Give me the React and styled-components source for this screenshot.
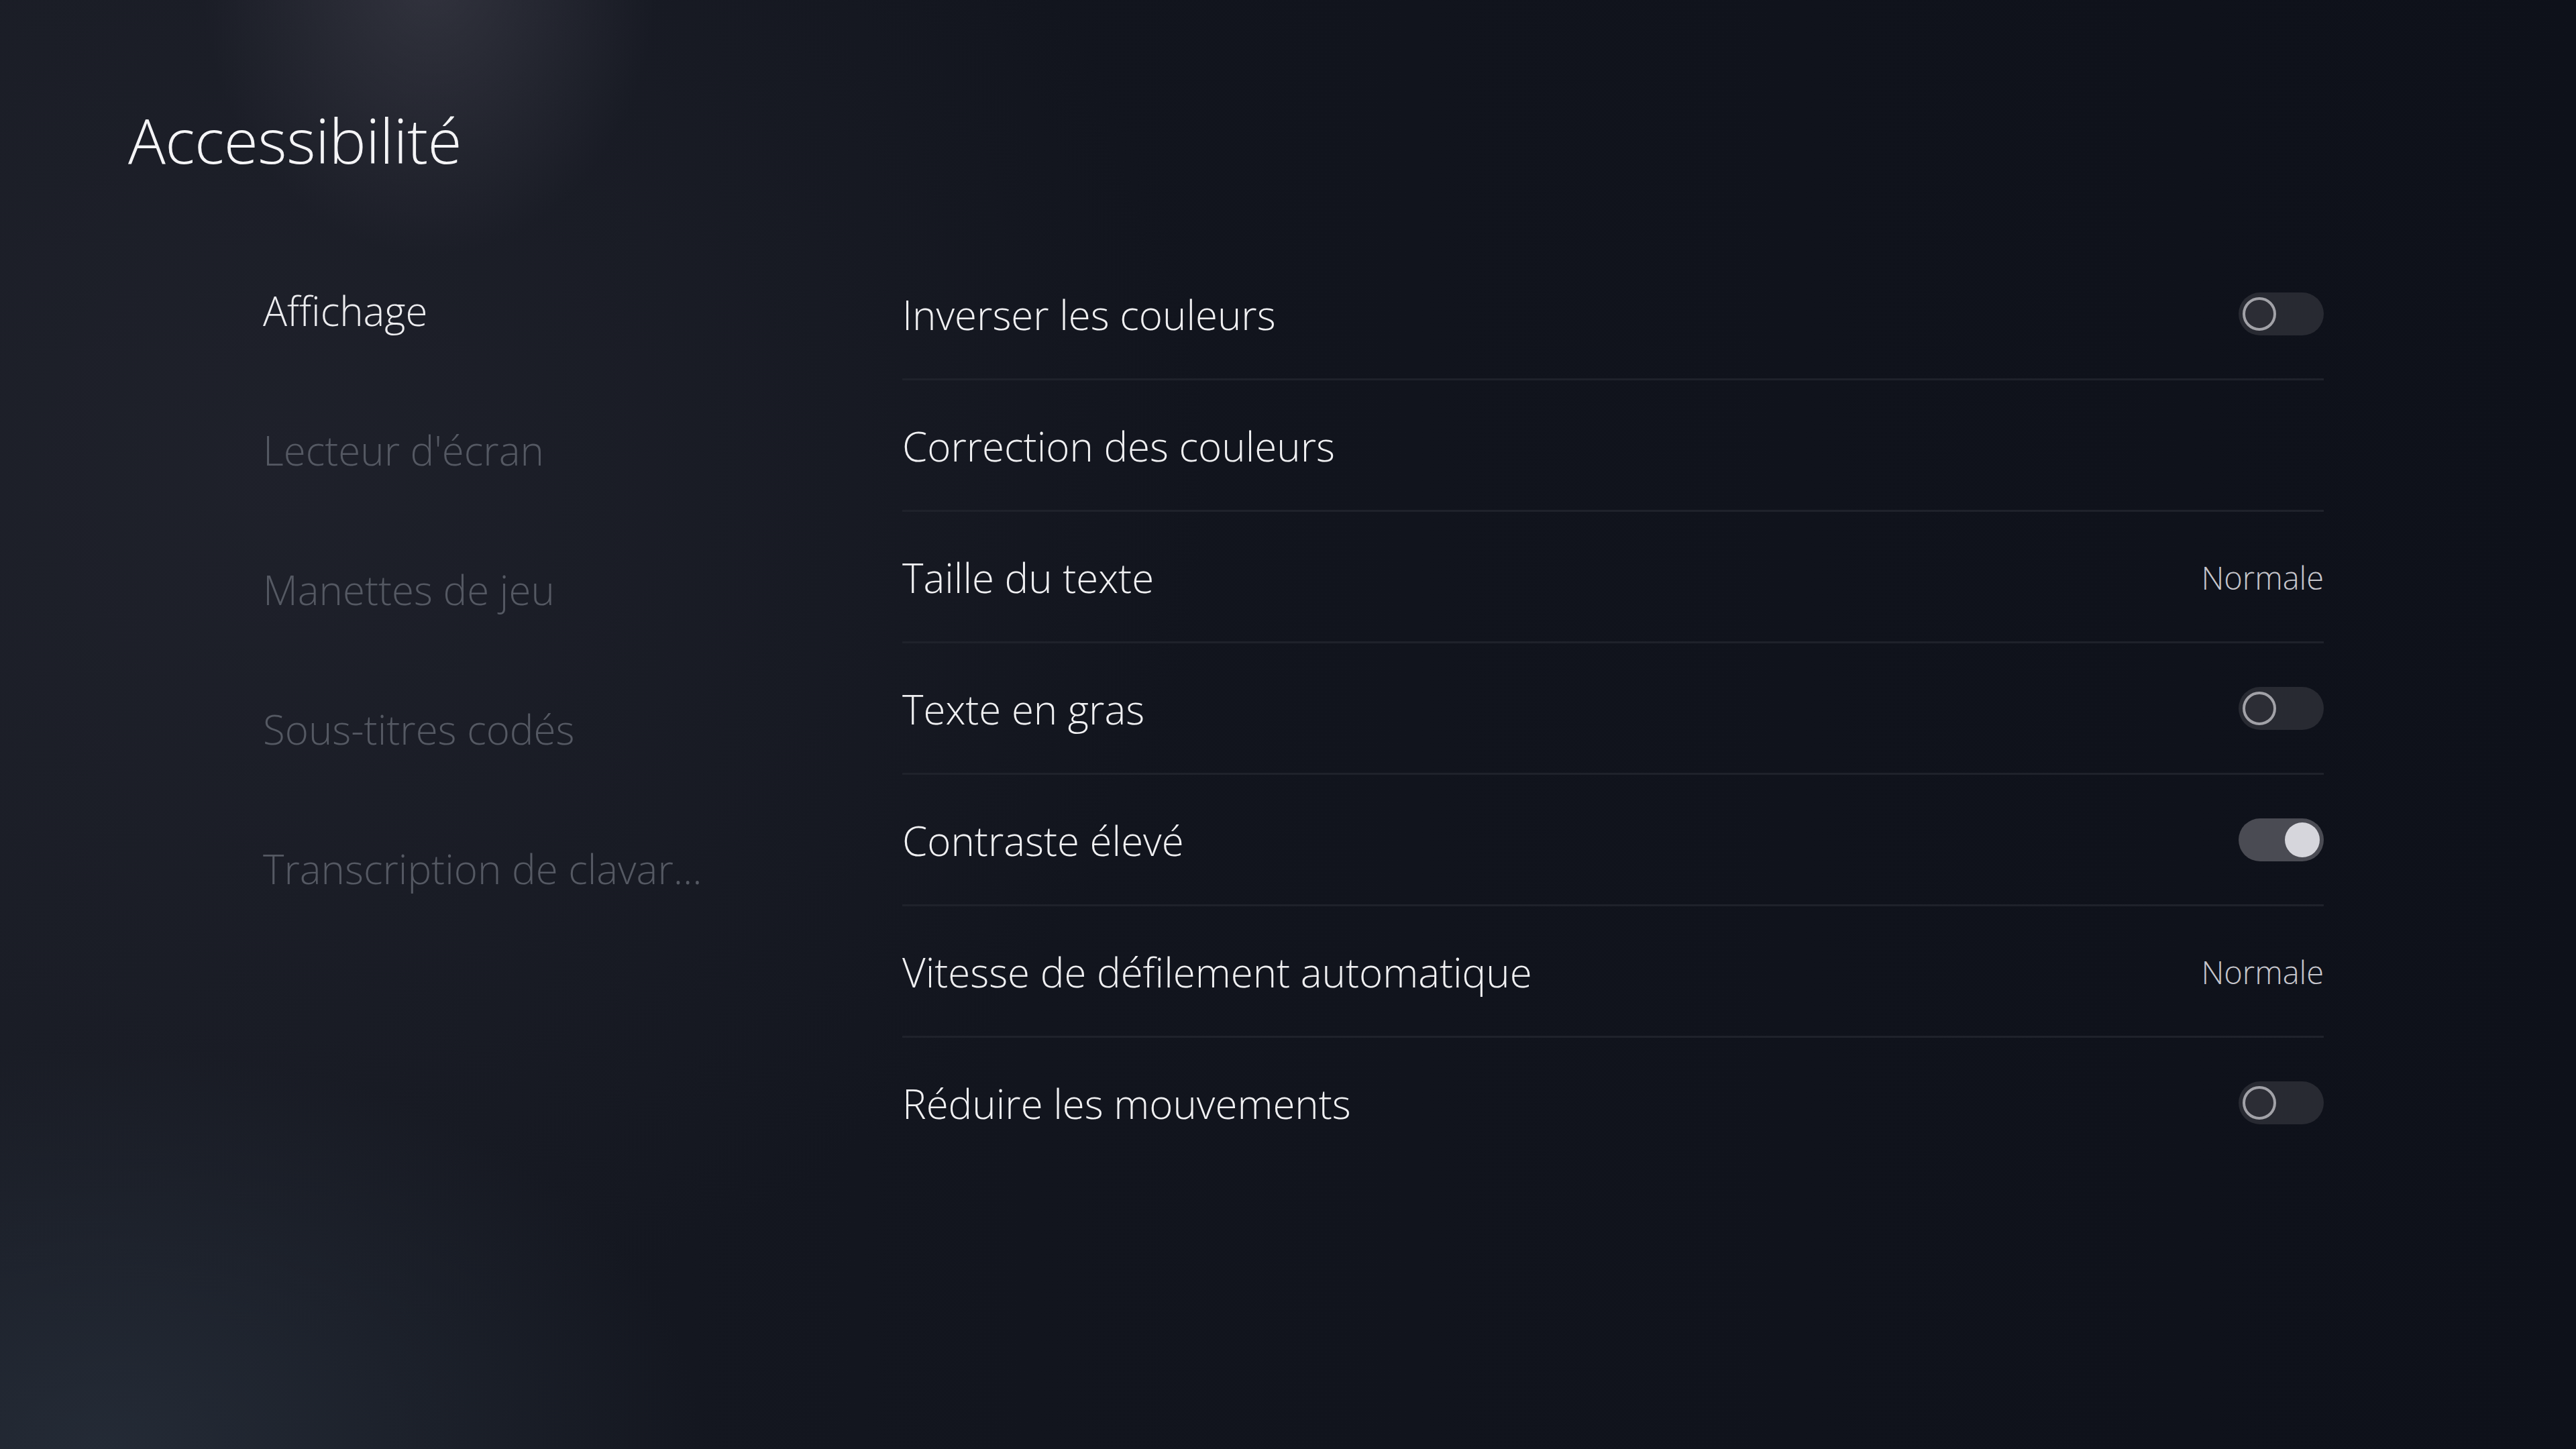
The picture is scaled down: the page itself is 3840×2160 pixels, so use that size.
import styled, { createGlobalStyle } from 'styled-components'

const GlobalStyle = createGlobalStyle`
  html, body {
    margin: 0;
    padding: 0;
    background: #10131b;
  }

  * {
    box-sizing: border-box;
  }
`

const Screen = styled.div`
  display: flex;
  flex-direction: column;
  width: 100%;
  min-height: 100vh;
  padding: 150px 0 0 191px;
  font-family: "Open Sans", "Noto Sans", sans-serif;
  font-weight: 300;
  color: #f0f0f2;
  background-color: #10131b;
  background-image:
    radial-gradient(ellipse 340px 420px at 640px -40px, rgba(70, 70, 82, 0.55) 0, transparent 100%),
    radial-gradient(ellipse 900px 600px at 150px 2160px, rgba(40, 48, 60, 0.75) 0, transparent 100%),
    radial-gradient(ellipse 1400px 1300px at 400px 700px, rgba(34, 36, 46, 0.7) 0, transparent 100%),
    linear-gradient(90deg, #181b24 0%, #12151e 40%, #0e111a 100%);
`

const Title = styled.h1`
  margin: 0;
  font-size: 93px;
  font-weight: 300;
  line-height: 116px;
  letter-spacing: -0.5px;
  color: #f4f4f6;
`

const Body = styled.div`
  display: grid;
  grid-template-columns: 953px 2119px;
  margin-top: 105px;
  padding-left: 201px;
`

const Nav = styled.nav`
  display: flex;
  flex-direction: column;
  margin-top: -12px;
`

const NavItem = styled.div`
  display: flex;
  align-items: center;
  height: 208px;
  font-size: 60px;
  font-weight: 300;
  color: ${p => (p.$active ? '#ececef' : '#555963')};
  white-space: nowrap;
`

const List = styled.div`
  display: flex;
  flex-direction: column;
`

const Row = styled.div`
  display: flex;
  align-items: center;
  justify-content: space-between;
  height: 196px;
  border-bottom: 3px solid ${p => (p.$last ? 'transparent' : '#1f222b')};
`

const Label = styled.span`
  font-size: 60px;
  font-weight: 300;
  color: #f0f0f2;
  padding-top: 3px;
`

const Value = styled.span`
  font-size: 47px;
  font-weight: 300;
  color: #c6c6cc;
  padding-top: 3px;
`

const Track = styled.div`
  display: flex;
  align-items: center;
  justify-content: ${p => (p.$on ? 'flex-end' : 'flex-start')};
  width: 127px;
  height: 64px;
  padding: 0 6px;
  border-radius: 32px;
  background: ${p => (p.$on ? '#4a4b53' : '#282a32')};
`

const Knob = styled.div`
  width: ${p => (p.$on ? 52 : 50)}px;
  height: ${p => (p.$on ? 52 : 50)}px;
  border-radius: 50%;
  background: ${p => (p.$on ? '#d6d6dc' : '#2c2d35')};
  border: ${p => (p.$on ? 'none' : '4px solid #a2a2a8')};
`

const Toggle = ({ on }) => (
  <Track $on={on}>
    <Knob $on={on} />
  </Track>
)

const sections = [
  'Affichage',
  "Lecteur d'écran",
  'Manettes de jeu',
  'Sous-titres codés',
  'Transcription de clavar...',
]

const settings = [
  { label: 'Inverser les couleurs', toggle: false },
  { label: 'Correction des couleurs' },
  { label: 'Taille du texte', value: 'Normale' },
  { label: 'Texte en gras', toggle: false },
  { label: 'Contraste élevé', toggle: true },
  { label: 'Vitesse de défilement automatique', value: 'Normale' },
  { label: 'Réduire les mouvements', toggle: false },
]

export default function App() {
  return (
    <>
      <GlobalStyle />
      <Screen>
        <Title>Accessibilité</Title>

        <Body>
          <Nav>
            {sections.map((name, i) => (
              <NavItem key={name} $active={i === 0}>
                {name}
              </NavItem>
            ))}
          </Nav>

          <List>
            {settings.map((s, i) => (
              <Row key={s.label} $last={i === settings.length - 1}>
                <Label>{s.label}</Label>
                {s.value && <Value>{s.value}</Value>}
                {s.toggle !== undefined && <Toggle on={s.toggle} />}
              </Row>
            ))}
          </List>
        </Body>
      </Screen>
    </>
  )
}
